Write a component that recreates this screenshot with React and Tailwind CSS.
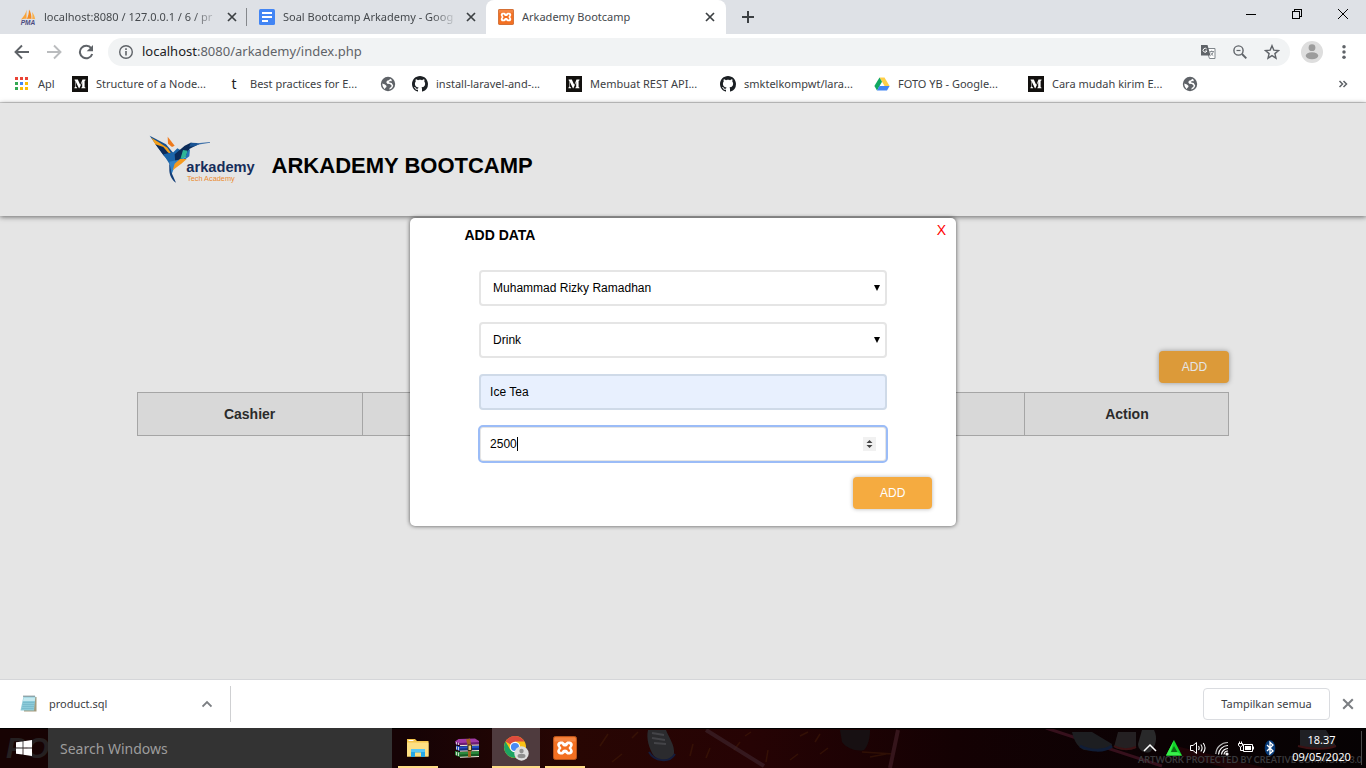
import React, { useState } from "react";

const MediumIcon = () => (
  <svg viewBox="0 0 16 16" className="size-4 shrink-0" aria-hidden="true">
    <rect width="16" height="16" fill="#12100e" />
    <path
      d="M2.6 3.6h3.2l2.5 5.3 2.2-5.3h3v.6l-.9.8v5.9l.9.8v.6H9.300v-.6l.9-.8V5.900L7.400 12.300h-.5L3.900 6v4.500l1.200 1.200v.6H2.400v-.6l1-1.200V5L2.600 4.200z"
      fill="#fff"
    />
  </svg>
);

const GithubIcon = () => (
  <svg viewBox="0 0 16 16" className="size-4 shrink-0" aria-hidden="true">
    <path
      fill="#1b1f23"
      fillRule="evenodd"
      d="M8 0C3.580 0 0 3.580 0 8c0 3.540 2.290 6.530 5.470 7.590.4.070.55-.17.55-.38 0-.19-.01-.82-.01-1.490-2.010.37-2.530-.49-2.690-.94-.09-.23-.48-.94-.82-1.130-.28-.15-.68-.52-.01-.53.63-.01 1.080.58 1.230.82.72 1.210 1.870.87 2.330.66.070-.52.28-.87.51-1.070-1.780-.2-3.640-.89-3.640-3.950 0-.87.31-1.590.82-2.150-.08-.2-.36-1.020.08-2.120 0 0 .67-.21 2.200.82.64-.18 1.320-.27 2-.27s1.360.09 2 .27c1.530-1.040 2.200-.82 2.200-.82.44 1.100.16 1.920.08 2.120.51.56.82 1.270.82 2.150 0 3.070-1.870 3.750-3.650 3.950.29.25.54.73.54 1.480 0 1.070-.01 1.930-.01 2.200 0 .21.15.46.55.38A8.010 8.010 0 0 0 16 8c0-4.420-3.580-8-8-8z"
    />
  </svg>
);

const GlobeIcon = () => (
  <svg viewBox="0 0 16 16" className="size-4 shrink-0" aria-hidden="true">
    <circle cx="8" cy="8" r="7.200" fill="#5f6368" />
    <path
      d="M10.300 2.700L8.800 4.300 7 4.800 6.300 6.300 7.200 7.800l2.600.2 1.700 1.200-.2 1.800-1.500.8-.6 1.600c2-.3 3.600-2 4-4l-1.500-2.400-2.300-.4-.6-.9 1.600-.8.900.500.600-1.300z"
      fill="#fff"
    />
    <path d="M2.300 7.600l2.700.9 1.600 1.500-.4 1.300-1 .7-.3 1.300C3.300 12 2.200 10 2.300 7.600z" fill="#fff" />
  </svg>
);

const DriveIcon = () => (
  <svg viewBox="0 0 16 16" className="size-4 shrink-0" aria-hidden="true">
    <path d="M5.500 1.500h5L15.600 10h-5z" fill="#ffcf48" />
    <path d="M5.500 1.500 8 5.800 3 14.400.4 10z" fill="#11a861" />
    <path d="M5.400 10h10.200L13 14.400H3z" fill="#4285f4" />
  </svg>
);

const LetterT = () => (
  <span className="flex size-4 shrink-0 items-center justify-center text-sm text-[#222]">t</span>
);

const XamppIcon = ({ className }) => (
  <svg viewBox="0 0 24 24" className={className} aria-hidden="true">
    <rect x=".5" y=".5" width="23" height="23" rx="2" fill="#f37022" stroke="#b9541b" />
    <path d="M1.500 1.500h21v4h-21z" fill="#fff" opacity=".15" />
    <path
      d="M7.500 5.500h2.200L12 7.300l2.300-1.800h2.200a3.200 3.200 0 0 1 2.600 5.200L18.300 12l.8 1.300a3.200 3.200 0 0 1-2.600 5.200h-2.200L12 16.700l-2.300 1.800H7.500a3.200 3.200 0 0 1-2.600-5.200L5.700 12l-.8-1.300a3.200 3.200 0 0 1 2.600-5.200z"
      fill="#fff"
    />
    <path
      d="M8.100 8.200c-1 0-1.500 1-.9 1.800L8.500 12l-1.300 2c-.6.800-.1 1.800.9 1.800h.8c.4-1.500 1.600-2.300 3.100-2.300s2.700.8 3.100 2.300h.8c1 0 1.500-1 .9-1.800L15.500 12l1.300-2c.6-.8.1-1.800-.9-1.800h-.8c-.4 1.500-1.600 2.300-3.100 2.300s-2.700-.8-3.100-2.300z"
      fill="#f37022"
    />
  </svg>
);

const CloseIcon = ({ className }) => (
  <svg viewBox="0 0 10 10" className={className} aria-hidden="true">
    <path d="M1 1l8 8M9 1L1 9" stroke="currentColor" strokeWidth="1.700" fill="none" />
  </svg>
);

const PmaIcon = () => (
  <svg viewBox="0 0 16 16" className="size-4 shrink-0" aria-hidden="true">
    <path d="M6.500.800C6 4 4 7.500 1 10.500c2-.6 4-.8 5.500-.5z" fill="#f9a43a" />
    <path d="M9 .400c1.800 2.500 2.600 6 2.400 9.600-1.500-.4-3-.4-4.500 0C8.200 7 9 4 9 .400z" fill="#f68b1f" />
    <path d="M12 3c1.600 1.800 2.800 4.500 3.200 7.200-1-.3-2-.4-3-.2.300-2.600.3-4.800-.2-7z" fill="#f9b04c" />
    <text x="8" y="15.500" textAnchor="middle" fontSize="6.500" fontWeight="bold" fontStyle="italic" fill="#4a4a80" fontFamily="Liberation Sans, sans-serif">PMA</text>
  </svg>
);

const DocsIcon = () => (
  <svg viewBox="0 0 16 16" className="size-4 shrink-0" aria-hidden="true">
    <rect width="16" height="16" rx="1.500" fill="#4285f4" />
    <path d="M3 3h10v2H3zM3 7h10v2H3zM3 11h6v2H3z" fill="#fff" />
  </svg>
);

function Tab({ icon, title, active, divider }) {
  return (
    <div
      className={
        active
          ? "flex w-60 shrink-0 items-center gap-2 rounded-t-lg bg-white pl-3 pr-[11px]"
          : divider
            ? "flex w-[239px] shrink-0 items-center gap-2 pl-3 pr-2.5 bg-[linear-gradient(#85888c,#85888c)] bg-[length:1px_18px] bg-[position:right_center] bg-no-repeat"
            : "flex w-[239px] shrink-0 items-center gap-2 pl-3 pr-2.5"
      }
    >
      {icon}
      <span
        className={
          active
            ? "min-w-0 flex-1 overflow-hidden whitespace-nowrap"
            : "min-w-0 flex-1 overflow-hidden whitespace-nowrap [mask-image:linear-gradient(to_right,#000_85%,transparent)]"
        }
      >
        {title}
      </span>
      <button type="button" aria-label="Close tab" className="text-[#3c4043]">
        <CloseIcon className="size-2.5" />
      </button>
    </div>
  );
}

function TabStrip() {
  return (
    <div className="flex h-[34px] bg-[#dee1e6] pl-2 text-[#45494d]">
      <Tab icon={<PmaIcon />} title="localhost:8080 / 127.0.0.1 / 6 / pr" divider />
      <Tab icon={<DocsIcon />} title="Soal Bootcamp Arkademy - Goog" />
      <Tab icon={<XamppIcon className="size-4 shrink-0" />} title="Arkademy Bootcamp" active />
      <button type="button" aria-label="New tab" className="flex w-11 items-center justify-center text-[#3c4043]">
        <svg viewBox="0 0 12 12" className="size-3">
          <path d="M6 0v12M0 6h12" stroke="currentColor" strokeWidth="2" />
        </svg>
      </button>
      <div className="ml-auto flex h-7 text-black">
        <button type="button" aria-label="Minimize" className="flex w-[46px] items-center justify-center">
          <svg viewBox="0 0 10 10" className="size-2.5" shapeRendering="crispEdges">
            <path d="M0 5.500h10" stroke="currentColor" />
          </svg>
        </button>
        <button type="button" aria-label="Restore" className="flex w-[46px] items-center justify-center">
          <svg viewBox="0 0 10 10" className="size-2.5" fill="none" shapeRendering="crispEdges">
            <path d="M.5 2.500h7v7h-7zM2.500 2V.500h7v7H8" stroke="currentColor" />
          </svg>
        </button>
        <button type="button" aria-label="Close" className="flex w-[46px] items-center justify-center">
          <svg viewBox="0 0 10 10" className="size-2.5">
            <path d="M0 0l10 10M10 0L0 10" stroke="currentColor" />
          </svg>
        </button>
      </div>
    </div>
  );
}

function Toolbar() {
  return (
    <div className="flex h-9 items-center bg-white pl-1.5 pr-3 text-[#5f6368]">
      <button type="button" aria-label="Back" className="flex w-8 justify-center">
        <svg viewBox="0 0 16 16" className="size-4" fill="none" stroke="currentColor" strokeWidth="1.900">
          <path d="M15 8H2M8 1.500L1.500 8 8 14.500" />
        </svg>
      </button>
      <button type="button" aria-label="Forward" className="flex w-8 justify-center text-[#babcbe]">
        <svg viewBox="0 0 16 16" className="size-4" fill="none" stroke="currentColor" strokeWidth="1.900">
          <path d="M1 8h13M8 1.500L14.500 8 8 14.500" />
        </svg>
      </button>
      <button type="button" aria-label="Reload" className="flex w-8 justify-center">
        <svg viewBox="0 0 16 16" className="size-4">
          <path d="M13.300 4.300A6.300 6.300 0 1 0 14.200 10" fill="none" stroke="currentColor" strokeWidth="2" />
          <path d="M15 1v6.300H8.700z" fill="currentColor" />
        </svg>
      </button>
      <div className="ml-1.5 flex h-7 min-w-0 flex-1 items-center rounded-full bg-[#f1f3f4] pl-2.5 pr-2.5">
        <svg viewBox="0 0 16 16" className="mr-2 size-4 shrink-0" aria-hidden="true">
          <circle cx="8" cy="8" r="6.300" fill="none" stroke="currentColor" strokeWidth="1.400" />
          <path d="M7.200 7h1.600v4.500H7.200zM7.200 4.300h1.600v1.600H7.200z" fill="currentColor" />
        </svg>
        <p className="flex-1 whitespace-nowrap text-[13px]">
          <span className="text-[#202124]">localhost</span>:8080/arkademy/index.php
        </p>
        <div className="flex items-center gap-4">
          <button type="button" aria-label="Translate">
            <svg viewBox="0 0 16 16" className="size-4">
              <path d="M6 4.500h9v10H9.500z" fill="#fff" stroke="#80868b" />
              <path d="M1 1h6.500l3 10.500H1z" fill="#5f6368" />
              <path d="M6.700 5A2 2 0 1 0 7 7H5.200" fill="none" stroke="#fff" />
              <path d="M9.500 7.500h4.500M11.700 6.500v1M13.300 7.500c-.4 2-1.600 3.400-2.900 4.300M10.600 8.500c.6 1.400 1.600 2.500 2.700 3.200" fill="none" stroke="#80868b" strokeWidth=".9" />
            </svg>
          </button>
          <button type="button" aria-label="Zoom">
            <svg viewBox="0 0 16 16" className="size-4" fill="none" stroke="currentColor">
              <circle cx="6.500" cy="6.500" r="4.600" strokeWidth="1.400" />
              <path d="M10 10l4.300 4.300" strokeWidth="1.900" />
              <path d="M4.500 6.500h4" strokeWidth="1.200" />
            </svg>
          </button>
          <button type="button" aria-label="Bookmark">
            <svg viewBox="0 0 16 16" className="size-4" fill="none" stroke="currentColor" strokeWidth="1.400">
              <path d="M8 1.700l1.800 4.400 4.700.4-3.600 3.100 1.100 4.600L8 11.700l-4 2.500 1.100-4.600L1.500 6.500l4.700-.4z" />
            </svg>
          </button>
        </div>
      </div>
      <button type="button" aria-label="Profile" className="ml-2.5">
        <svg viewBox="0 0 24 24" className="size-6">
          <circle cx="12" cy="12" r="11" fill="#dedede" />
          <circle cx="12" cy="7.700" r="3.400" fill="#9c9c9c" />
          <ellipse cx="12" cy="15.700" rx="6.300" ry="3.500" fill="#9c9c9c" />
        </svg>
      </button>
      <button type="button" aria-label="Menu" className="ml-2.5">
        <svg viewBox="0 0 16 16" className="size-5" fill="currentColor">
          <circle cx="8" cy="3.800" r="1.400" />
          <circle cx="8" cy="8" r="1.400" />
          <circle cx="8" cy="12.200" r="1.400" />
        </svg>
      </button>
    </div>
  );
}

const bookmarks = [
  { icon: <MediumIcon />, label: "Structure of a Node..." },
  { icon: <LetterT />, label: "Best practices for E..." },
  { icon: <GlobeIcon /> },
  { icon: <GithubIcon />, label: "install-laravel-and-..." },
  { icon: <MediumIcon />, label: "Membuat REST API..." },
  { icon: <GithubIcon />, label: "smktelkompwt/lara..." },
  { icon: <DriveIcon />, label: "FOTO YB - Google..." },
  { icon: <MediumIcon />, label: "Cara mudah kirim E..." },
  { icon: <GlobeIcon /> },
];

const appColors = ["#ea4335", "#ea4335", "#ea4335", "#34a853", "#4285f4", "#fbbc05", "#34a853", "#fbbc05", "#fbbc05"];

function BookmarksBar() {
  return (
    <nav className="flex h-[33px] items-center overflow-hidden border-b border-[#d5d5d5] bg-white pb-1 pl-3.5 pr-[18px] text-[#3c4043]">
      <a href="#apps" className="flex w-[58px] shrink-0 items-center gap-2">
        <svg viewBox="0 0 16 16" className="size-4" shapeRendering="crispEdges" aria-hidden="true">
          {appColors.map((c, i) => (
            <rect key={i} x={1 + (i % 3) * 5} y={1 + Math.floor(i / 3) * 5} width="3" height="3" fill={c} />
          ))}
        </svg>
        Apl
      </a>
      {bookmarks.map((b, i) => (
        <a
          key={i}
          href="#bookmark"
          aria-label={b.label ? undefined : "Bookmark"}
          className={b.label ? "flex w-[154px] shrink-0 items-center gap-2 whitespace-nowrap" : "flex w-8 shrink-0 items-center"}
        >
          {b.icon}
          {b.label}
        </a>
      ))}
      <button type="button" aria-label="More bookmarks" className="ml-auto text-[#5f6368]">
        <svg viewBox="0 0 10 10" className="size-2.5" fill="none" stroke="currentColor" strokeWidth="1.500">
          <path d="M1.500 2l3 3-3 3M5.500 2l3 3-3 3" />
        </svg>
      </button>
    </nav>
  );
}

function ArkademyLogo() {
  return (
    <svg viewBox="15 12 324 150" className="h-[50px] w-[108px] shrink-0 overflow-visible" role="img" aria-label="arkademy Tech Academy">
      <path d="M17 14L58 72 78 92 88 66 66 40z" fill="#15508f" />
      <path d="M22 20l26 16 22 14 12 18-24-8-24-20z" fill="#f6a01a" />
      <path d="M34 40l24 8 22 26-2 18-20-20z" fill="#0d2c5a" />
      <path d="M71 17l21 27-8 4-12-10z" fill="#ee7a1c" />
      <path d="M58 70l30-6 12-12 14 8-20 36-18 2z" fill="#1b64a8" />
      <path d="M92 70l30-26 18-9 26 3-30 16-8 20-34 22z" fill="#0b2b59" />
      <path d="M140 35l18 1 8 4-14 6-16 1z" fill="#1a5494" />
      <path d="M160 37l38-4v2l-38 6z" fill="#3c6fa8" />
      <path d="M117 57l14 2-6 20-16 6z" fill="#2eb597" />
      <path d="M130 62l8-8-2 22-22 16-14-4 24-8z" fill="#2473b6" />
      <path d="M76 92l28-6-14 26-8 20-4-16z" fill="#3182c6" />
      <path d="M92 98l16-14 20 0-16 14-26 20z" fill="#f59a1f" />
      <path d="M76 94l6 30 14 31c-12-8-19-22-20-36z" fill="#133e78" />
      <text x="127" y="123" fontSize="44" fontWeight="bold" fill="#152d5a" fontFamily="Liberation Sans, Arial, sans-serif">arkademy</text>
      <text x="129" y="150" fontSize="22" fill="#ea8a2f" fontFamily="Liberation Sans, Arial, sans-serif">Tech Academy</text>
    </svg>
  );
}

const fieldBase = "h-9 w-full rounded border-2 text-xs text-black";

function SelectField({ id, label, options }) {
  return (
    <div className="relative">
      <label htmlFor={id} className="sr-only">{label}</label>
      <select id={id} className={fieldBase + " appearance-none border-[#e5e5e5] bg-white pl-3 pr-6 outline-none"}>
        {options.map((o) => (
          <option key={o}>{o}</option>
        ))}
      </select>
      <svg viewBox="0 0 6 6" className="pointer-events-none absolute right-[7px] top-[15px] size-1.5" aria-hidden="true">
        <path d="M0 0h6L3 6z" fill="#000" />
      </svg>
    </div>
  );
}

function AddDataModal() {
  const [product, setProduct] = useState("Ice Tea");
  const [price, setPrice] = useState("2500");
  return (
    <div className="absolute inset-0 flex items-start justify-center pt-[115px]">
      <form
        role="dialog"
        aria-labelledby="modal-title"
        onSubmit={(e) => e.preventDefault()}
        className="w-2/5 rounded-[5px] bg-white pb-[17px] shadow-[0_0_4px_rgba(0,0,0,0.65)]"
      >
        <div className="flex h-[52px] items-start justify-between pl-[10%] pr-2.5">
          <h2 id="modal-title" className="pt-[5px] text-sm font-bold leading-6">ADD DATA</h2>
          <button type="button" className="text-sm leading-6 text-[#f00]">X</button>
        </div>
        <div className="mx-auto flex w-3/4 flex-col gap-4 px-px">
          <SelectField id="cashier" label="Cashier" options={["Muhammad Rizky Ramadhan"]} />
          <SelectField id="category" label="Category" options={["Drink", "Food"]} />
          <div>
            <label htmlFor="product" className="sr-only">Product</label>
            <input
              id="product"
              value={product}
              onChange={(e) => setProduct(e.target.value)}
              className={fieldBase + " block border-[#cfdae8] bg-[#e8f0fe] px-[9px] outline-none"}
            />
          </div>
          <div className="relative">
            <label htmlFor="price" className="sr-only">Price</label>
            <input
              id="price"
              type="number"
              value={price}
              onChange={(e) => setPrice(e.target.value)}
              className={fieldBase + " block border-[#e5e5e5] bg-white px-[9px] caret-transparent outline-2 -outline-offset-1 outline-[#9bbcf7] [appearance:textfield] [&::-webkit-inner-spin-button]:appearance-none"}
            />
            <span className="pointer-events-none absolute left-[38px] top-[11px] h-3.5 w-px bg-black" />
            <svg viewBox="0 0 13 14" className="pointer-events-none absolute right-[11px] top-[11px] h-3.5 w-[13px]" aria-hidden="true">
              <rect width="13" height="14" fill="#f1f1f1" />
              <path d="M3.500 6h6l-3-3zM3.500 8h6l-3 3z" fill="#454545" />
            </svg>
          </div>
        </div>
        <div className="flex justify-end pr-6 pt-[15px]">
          <button type="submit" className="h-8 w-[79px] rounded bg-[#f5ab40] text-xs text-white shadow-[0_0_4px_rgba(0,0,0,0.3)]">
            ADD
          </button>
        </div>
      </form>
    </div>
  );
}

function ArkademyPage() {
  return (
    <main className="relative flex-1 bg-[#e5e5e5] font-['Liberation_Sans',Arial,sans-serif] text-black">
      <header className="flex h-[113px] items-center px-[10%] shadow-[0_1px_5px_rgba(0,0,0,0.55)]">
        <div className="flex items-center gap-[15px] pl-3">
          <ArkademyLogo />
          <h1 className="pt-3 text-[22px] font-bold leading-7">ARKADEMY BOOTCAMP</h1>
        </div>
      </header>
      <section className="px-[10%] pt-[135px]">
        <div className="mb-[9px] flex justify-end">
          <button type="button" className="h-8 w-[70px] rounded bg-[#dc9a39] text-xs text-[#e5e5e5] shadow-[0_0_5px_rgba(0,0,0,0.35)]">
            ADD
          </button>
        </div>
        <table className="w-full table-fixed border-collapse text-sm text-[#2b2b2b]">
          <colgroup>
            <col className="w-[225px]" />
            <col />
            <col className="w-[204px]" />
          </colgroup>
          <thead>
            <tr className="h-[43px] bg-[#d8d8d8]">
              <th className="border border-[#a5a5a5]">Cashier</th>
              <td className="border border-[#a5a5a5]" />
              <th className="border border-[#a5a5a5]">Action</th>
            </tr>
          </thead>
        </table>
      </section>
      <AddDataModal />
    </main>
  );
}

function DownloadBar() {
  return (
    <div className="flex h-[49px] shrink-0 items-center border-t border-[#d5d6d9] bg-white text-[#3c4043]">
      <div className="flex h-9 w-[231px] items-center border-r border-[#cfd0d2] pl-5 pr-[18px]">
        <svg viewBox="0 0 18 18" className="mr-[11px] size-[18px]" aria-hidden="true">
          <path d="M4.500 2h12v14.500H4z" fill="#a39a7c" />
          <path d="M3.500 1.500h12L14 15.500H.500z" fill="#8ccbd9" />
          <path d="M3.700 2.500h11.500l-.4 3.500H3z" fill="#c3e9f0" />
          <path d="M3 7.500h11.500M2.600 9.500h11.600M2.300 11.500h11.600M2 13.500h11.600" stroke="#6fb2c4" strokeWidth=".6" />
          <path d="M3.500 1.200h12" stroke="#52646a" strokeWidth="1.600" strokeDasharray="1 1" />
        </svg>
        <span className="flex-1">product.sql</span>
        <button type="button" aria-label="Download options">
          <svg viewBox="0 0 10 10" className="size-2.5" fill="none" stroke="#7b7e82" strokeWidth="1.800">
            <path d="M.500 7.500L5 3l4.500 4.500" />
          </svg>
        </button>
      </div>
      <div className="ml-auto flex items-center gap-3 pr-3">
        <button type="button" className="h-8 w-[127px] rounded border border-[#dadce0]">Tampilkan semua</button>
        <button type="button" aria-label="Close downloads" className="text-[#7b7e82]">
          <CloseIcon className="size-3" />
        </button>
      </div>
    </div>
  );
}

function TaskbarBackdrop() {
  return (
    <svg viewBox="0 0 1366 40" preserveAspectRatio="none" className="absolute inset-0 h-full w-full" aria-hidden="true">
      <defs>
        <linearGradient id="floor">
          <stop offset="0" stopColor="#170303" />
          <stop offset=".3" stopColor="#160305" />
          <stop offset=".42" stopColor="#280603" />
          <stop offset=".55" stopColor="#260304" />
          <stop offset=".7" stopColor="#140103" />
          <stop offset=".85" stopColor="#0b0204" />
          <stop offset="1" stopColor="#060203" />
        </linearGradient>
      </defs>
      <rect width="1366" height="40" fill="url(#floor)" />
      <g stroke="#4d2408" strokeWidth="1.500" opacity=".4">
        <path d="M600 18l8-12M612 34l10-8M632 10l6-6M690 28l3-12M706 30l4-10M734 22l6-8M745 8l6-4M766 34l2-12M800 8l8-4M820 26l8-6M815 14l5-8M862 24l32 2M870 29l16-3M790 32l8-6" />
      </g>
      <path d="M706 2l58 36" stroke="#3c2229" strokeWidth="4" opacity=".7" />
      <path d="M898 2l-8 38" stroke="#35151b" strokeWidth="4" />
      <path d="M1046 0l116 38" stroke="#36101c" strokeWidth="3" />
      <path d="M648 2h18c3 8 9 15 8 24-4 8-14 8-20 2-5-7-8-18-6-26z" fill="#2b2b2e" />
      <path d="M649 24c5 9 20 12 26 2" fill="none" stroke="#151d3c" strokeWidth="2" />
      <path d="M652 5l12 2M652 10l13 2M654 15l12 1" stroke="#444448" strokeWidth="2" />
      <path d="M840 2h30c0 8-2 16-6 20-8 2-18-2-22-8z" fill="#171012" />
      <path d="M1072 4h20l20 12c1 6-14 8-28 6-5-2-10-8-12-18z" fill="#1d1e21" />
      <path d="M1080 18c10 5 24 6 32 0" stroke="#101d37" strokeWidth="3" fill="none" />
      <path d="M1118 4h18v16c-8 3-18 2-22-1z" fill="#242022" />
      <path d="M1114 18c6 4 16 4 22 1" stroke="#3c1214" strokeWidth="2" fill="none" />
      <path d="M1142 2h12c4 8 2 16-4 22-6 2-12-2-12-8z" fill="#29292a" />
      <path d="M1300 2h26l10 16c-6 4-26 4-36 0z" fill="#202024" />
      <path d="M1298 18c10 3 28 4 38 0" stroke="#3c1214" strokeWidth="2" fill="none" />
      <path d="M1176 18l90 22h-40l-60-16z" fill="#1e0407" />
      <rect width="1366" height="1" fill="#000" />
    </svg>
  );
}

const FolderIcon = () => (
  <svg viewBox="0 0 24 22" className="h-[22px] w-6" aria-hidden="true">
    <path d="M1 2h8l2 2h11.500v15.500H1z" fill="#f5c64d" />
    <path d="M1 5.500h21.500v14H1z" fill="#fddf83" />
    <path d="M2.500 3h5v1h-5z" fill="#fff" />
    <path d="M5 12h14v8h-4v-4.500H9V20H5z" fill="#27a9e8" />
    <path d="M5 12h14v3H5z" fill="#58c7f5" />
  </svg>
);

const WinrarIcon = () => (
  <svg viewBox="0 0 24 20" className="h-5 w-6" aria-hidden="true">
    <path d="M0 3.500L3.500 1 20 .500 24 3v3.500L4.500 7 1 6z" fill="#a23aa6" />
    <path d="M0 3.500L4.500 5 24 4v2.500L4.500 7.300.5 6z" fill="#6c1c74" />
    <path d="M1 7.500l3.500 1L24 7.500V12l-19.500.7L1 11.500z" fill="#2450c8" />
    <path d="M4.500 10.500L24 9.800V12l-19.500.7z" fill="#15308a" />
    <path d="M0 13l4.500 1L24 13v5l-19.500 1L0 17z" fill="#2b8a3c" />
    <path d="M4.500 16.500L24 15.700V18l-19.500 1z" fill="#165a24" />
    <path d="M5 7.600l19-.6M5 13.200l19-.7M5 19.300l19-.8" stroke="#efe9da" strokeWidth="1" />
    <path d="M1.500 4v2.500M3.500 4.700V7M1.500 8.500v3M3.500 9v3.300M1.500 14v3.300M3.500 14.500v3.500" stroke="#ddd" strokeWidth=".9" />
    <path d="M11 1.500l4-1 1 6.500v12h-3V8z" fill="#a2641f" />
    <path d="M13 7h3.500v5.500H13z" fill="#e8cf80" stroke="#43300e" />
  </svg>
);

const ChromeIcon = () => (
  <svg viewBox="0 0 26 26" className="size-[26px]" aria-hidden="true">
    <circle cx="12" cy="12" r="11" fill="#fbc116" />
    <path d="M12 12L2.500 6.500A11 11 0 0 1 21.500 6.500H12z" fill="#dd4b3e" />
    <path d="M2.500 6.500A11 11 0 0 0 12 23l4.800-8.300L7.200 14.700z" fill="#1da362" />
    <circle cx="12" cy="12" r="5.200" fill="#fff" />
    <circle cx="12" cy="12" r="4.100" fill="#4a8af4" />
    <circle cx="18.500" cy="18.500" r="7.200" fill="#dedede" />
    <circle cx="18.500" cy="16" r="2.200" fill="#8f8f8f" />
    <ellipse cx="18.500" cy="21" rx="4" ry="2.200" fill="#8f8f8f" />
  </svg>
);

function TaskButton({ label, active, open, children }) {
  return (
    <button
      type="button"
      aria-label={label}
      className={active ? "flex h-10 w-12 flex-col items-center bg-[#4f3b3e]" : "flex h-10 w-12 flex-col items-center"}
    >
      <span className="flex flex-1 items-center">{children}</span>
      {open && <span className={active ? "-mt-0.5 h-0.5 w-full bg-[#fddc87]" : "-mt-0.5 h-0.5 w-10 bg-[#fddc87]"} />}
    </button>
  );
}

const trayIcons = [
  { label: "Show hidden icons", art: <path d="M2 11L8 5l6 6" fill="none" stroke="#fff" strokeWidth="1.500" /> },
  {
    label: "Network meter",
    art: (
      <>
        <path d="M8 0L16 15.500H0z" fill="#12d62a" />
        <path d="M8 6l3.400 6H5z" fill="#0a6d14" />
        <path d="M8 0L4.600 12.300H12L16 15.500H0z" fill="#39f04c" />
      </>
    ),
  },
  {
    label: "Volume",
    art: (
      <g fill="none" stroke="#fff">
        <path d="M.5 5.500h2.500l3.500-3v11L3 10.500H.5z" />
        <path d="M8.500 6c.8 1.200.8 2.800 0 4M10.800 4.500c1.500 2 1.500 5 0 7M13.200 3c2.200 3 2.200 7 0 10" strokeWidth="1.100" />
      </g>
    ),
  },
  {
    label: "Wi-Fi",
    art: (
      <g fill="none" stroke="#fff" strokeWidth="1.200">
        <path d="M1.800 14A12 12 0 0 1 14 2.500" stroke="#bbb" />
        <path d="M4.500 14.500A9.500 9.500 0 0 1 14 5.500M7.500 14.500A6.500 6.500 0 0 1 14 8.500M10 14.500a4 4 0 0 1 4-3.500" />
        <circle cx="13" cy="14" r="1" fill="#fff" />
      </g>
    ),
  },
  {
    label: "Battery",
    art: (
      <g fill="none" stroke="#fff">
        <path d="M5.500 4.500h9v7h-9zM15.500 6.500v3M1.500 1.500v2M3.500 1.500v2M.5 3.500h4v2l-2 1.500-2-1.500zM2.500 7v3.500h3" />
        <path d="M7 6h6v4H7z" fill="#fff" stroke="none" />
      </g>
    ),
  },
  {
    label: "Bluetooth",
    art: (
      <>
        <ellipse cx="8" cy="8" rx="5.300" ry="7.700" fill="#063a78" />
        <path d="M5 5l6 6-3 2.700V2.300L11 5l-6 6" fill="none" stroke="#fff" strokeWidth="1.300" />
      </>
    ),
  },
];

function Taskbar() {
  return (
    <footer className="relative flex h-10 shrink-0 items-center overflow-hidden bg-[#140304]">
      <TaskbarBackdrop />
      <span className="absolute left-1.5 top-0.5 font-['Liberation_Sans',Arial,sans-serif] text-3xl font-bold italic leading-9 text-[#252021]" aria-hidden="true">
        POS
      </span>
      <span className="absolute right-1 top-[26px] whitespace-nowrap font-[Lato,sans-serif] text-[9px] font-bold leading-3 text-[#39393b]">
        ARTWORK PROTECTED BY CREATIVE COMMONS 3.0
      </span>
      <button type="button" aria-label="Start" className="relative flex w-12 justify-center">
        <svg viewBox="0 0 16 16" className="size-4" fill="#fff">
          <path d="M0 2.300L6.600 1.400v6.200H0zM7.400 1.300L16 0v7.600H7.400zM0 8.400h6.600v6.200L0 13.700zM7.400 8.400H16V16l-8.600-1.300z" />
        </svg>
      </button>
      <input
        type="search"
        aria-label="Search Windows"
        placeholder="Search Windows"
        className="relative h-10 w-[344px] bg-[#333333] px-3 text-sm text-white outline-none placeholder:text-[#9d9d9d]"
      />
      <div className="relative ml-0.5 flex gap-px">
        <TaskButton label="File Explorer" open><FolderIcon /></TaskButton>
        <TaskButton label="WinRAR"><WinrarIcon /></TaskButton>
        <TaskButton label="Chrome" open active><ChromeIcon /></TaskButton>
        <TaskButton label="XAMPP" open><XamppIcon className="size-6" /></TaskButton>
      </div>
      <div className="relative ml-auto flex items-center">
        {trayIcons.map((t) => (
          <button key={t.label} type="button" aria-label={t.label} className="flex w-6 justify-center">
            <svg viewBox="0 0 16 16" className="size-4">{t.art}</svg>
          </button>
        ))}
        <div className="w-20 border-r border-[#4a4a4a] text-center leading-[17px] text-white">
          <div>18.37</div>
          <div>09/05/2020</div>
        </div>
        <div className="w-1" />
      </div>
    </footer>
  );
}

export default function App() {
  return (
    <div className="flex min-h-screen flex-col overflow-hidden bg-white font-['Noto_Sans','Open_Sans',sans-serif] text-[11px]">
      <TabStrip />
      <Toolbar />
      <BookmarksBar />
      <ArkademyPage />
      <DownloadBar />
      <Taskbar />
    </div>
  );
}
